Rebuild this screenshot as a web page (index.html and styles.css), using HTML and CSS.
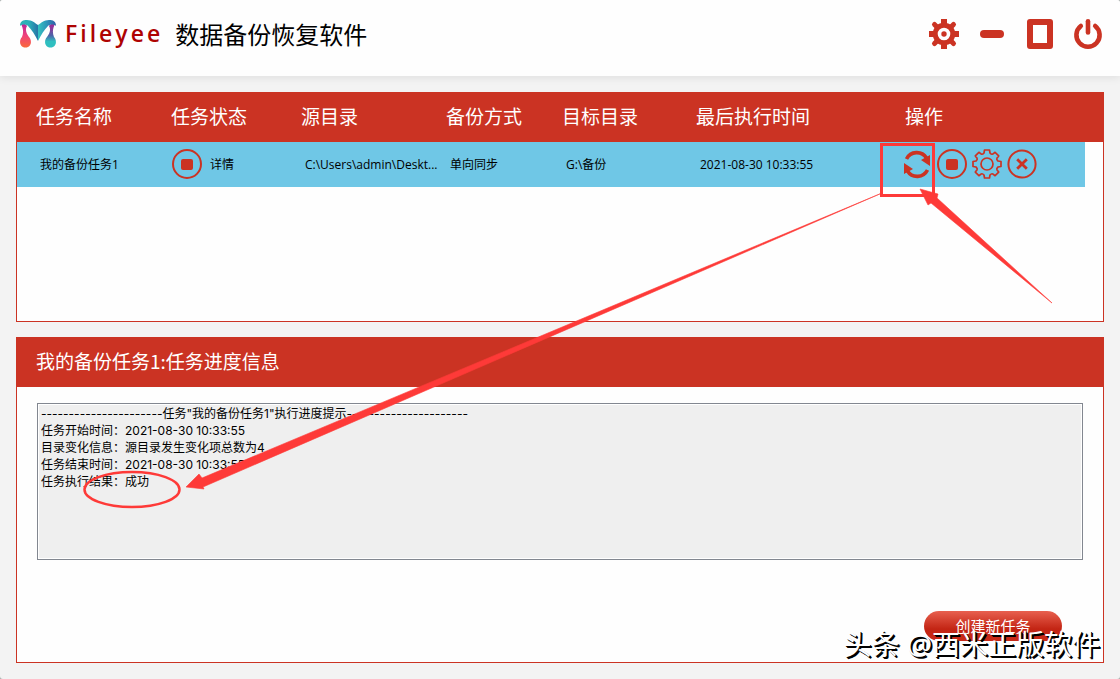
FILE: index.html
```html
<!DOCTYPE html>
<html lang="zh-CN">
<head>
<meta charset="utf-8">
<title>Fileyee 数据备份恢复软件</title>
<link rel="stylesheet" href="styles.css">
</head>
<body>
<div class="window">
  <header class="topbar">
    <svg class="logo" viewBox="0 0 36 28" aria-hidden="true">
      <defs>
        <linearGradient id="legLeft" x1="0" y1="0" x2="0" y2="1">
          <stop offset="0" stop-color="#b5279a"/><stop offset=".5" stop-color="#f0417c"/><stop offset="1" stop-color="#f9693a"/>
        </linearGradient>
        <linearGradient id="legRight" x1="0" y1="0" x2="0" y2="1">
          <stop offset="0" stop-color="#a32a96"/><stop offset=".2" stop-color="#8a3a9c"/><stop offset=".5" stop-color="#4b65a8"/><stop offset=".75" stop-color="#2fbfc0"/>
        </linearGradient>
        <linearGradient id="ribbon" x1="0" y1="0" x2="1" y2="0">
          <stop offset="0" stop-color="#2bb3b8"/><stop offset=".25" stop-color="#2bb0b8"/><stop offset=".49" stop-color="#2875a8"/><stop offset=".5" stop-color="#35c4c0"/><stop offset=".75" stop-color="#2d93b9"/><stop offset="1" stop-color="#315ea6"/>
        </linearGradient>
      </defs>
      <path fill="url(#legLeft)" d="M1 4C3 3 6 4 7 6C5 9 6 13 9 17C12 20 12 27 5.500 27.500C-1 27 -1 20 2 17C4 12 3 8 1 4Z"/>
      <path fill="url(#legRight)" d="M35 4C33 3 30 4 29 6C31 9 30 13 27 17C24 20 24 27 30.500 27.500C37 27 37 20 34 17C32 12 33 8 35 4Z"/>
      <path fill="url(#ribbon)" d="M0 6C0 1 3 0 7 0C12 0 15 3 18 5C21 3 24 0 29 0C33 0 36 1 36 6C34 4 30 4 28 6C24 10 21 15 18 21C15 15 12 10 8 6C6 4 2 4 0 6Z"/>
    </svg>
    <span class="brand">Fileyee</span>
    <h1 class="app-title">数据备份恢复软件</h1>
    <div class="window-actions">
      <button class="icon-button" type="button" aria-label="设置">
        <svg class="icon" viewBox="-15 -15 30 30">
          <g fill="none" stroke="currentColor">
            <circle r="8.800" stroke-width="5"/>
            <path stroke-width="6" d="M0-15V-9M0 15V9M-15 0H-9M15 0H9"/>
            <path stroke-width="5" stroke-linecap="round" d="M-9.500-9.500L-7-7M9.500-9.500L7-7M-9.500 9.500L-7 7M9.500 9.500L7 7"/>
          </g>
          <circle r="2.700" fill="currentColor"/>
        </svg>
      </button>
      <button class="icon-button" type="button" aria-label="最小化">
        <svg class="icon" viewBox="0 0 30 30"><rect x="3" y="11" width="24" height="8" rx="4" fill="currentColor"/></svg>
      </button>
      <button class="icon-button" type="button" aria-label="最大化">
        <svg class="icon" viewBox="0 0 30 30"><path fill="currentColor" fill-rule="evenodd" d="M5 0H25Q28 0 28 3V27Q28 30 25 30H5Q2 30 2 27V3Q2 0 5 0ZM8 6V24H22V6Z"/></svg>
      </button>
      <button class="icon-button" type="button" aria-label="关闭">
        <svg class="icon" viewBox="0 0 30 30"><g fill="none" stroke="currentColor" stroke-width="4.600" stroke-linecap="round"><path d="M7.800 7A11.600 11.600 0 1 0 22.200 7"/><path d="M15 2.300V13.500"/></g></svg>
      </button>
    </div>
  </header>

  <main class="content">
    <section class="panel task-panel">
      <table class="tasks">
        <colgroup>
          <col class="col-name"><col class="col-state"><col class="col-source"><col class="col-mode"><col class="col-target"><col class="col-time"><col><col class="col-scroll">
        </colgroup>
        <thead>
          <tr><th>任务名称</th><th>任务状态</th><th>源目录</th><th>备份方式</th><th>目标目录</th><th>最后执行时间</th><th>操作</th><th></th></tr>
        </thead>
        <tbody>
          <tr>
            <td>我的备份任务1</td>
            <td class="state-cell">
              <div class="state">
                <button class="icon-button" type="button" aria-label="停止">
                  <svg class="icon" viewBox="0 0 30 30"><circle cx="15" cy="15" r="14" fill="none" stroke="currentColor" stroke-width="2"/><rect x="9" y="10" width="12" height="11" rx="2" fill="currentColor"/></svg>
                </button>
                <span>详情</span>
              </div>
            </td>
            <td>C:\Users\admin\Deskt...</td>
            <td>单向同步</td>
            <td>G:\备份</td>
            <td>2021-08-30 10:33:55</td>
            <td class="actions-cell">
              <div class="actions">
                <button class="icon-button" type="button" aria-label="执行">
                  <svg class="icon" viewBox="-15 -15 30 30">
                    <g fill="none" stroke="currentColor" stroke-width="3.600"><path d="M-10.500-5A11.500 11.500 0 0 1 9.500-6"/><path d="M10.500 6A11.500 11.500 0 0 1-9.500 7"/></g>
                    <path fill="currentColor" d="M13-9V2L4-4ZM-13 10V-1L-4 5Z"/>
                  </svg>
                </button>
                <button class="icon-button" type="button" aria-label="停止任务">
                  <svg class="icon" viewBox="0 0 30 30"><circle cx="15" cy="15" r="14" fill="none" stroke="currentColor" stroke-width="2"/><rect x="9" y="10" width="12" height="11" rx="2" fill="currentColor"/></svg>
                </button>
                <button class="icon-button" type="button" aria-label="任务设置">
                  <svg class="icon" viewBox="-15 -15 30 30">
                    <g fill="none" stroke="currentColor" stroke-width="1.700" stroke-linejoin="round">
                      <circle r="6"/>
                      <path d="M-2.500-14H2.500L3-11Q4.500-9.300 5.700-9.900L8.100-11.700L11.700-8.100L9.900-5.700Q9.300-4.500 11-3L14-2.500V2.500L11 3Q9.300 4.500 9.900 5.700L11.700 8.100L8.100 11.700L5.700 9.900Q4.500 9.300 3 11L2.500 14H-2.500L-3 11Q-4.500 9.300-5.700 9.900L-8.100 11.700L-11.700 8.100L-9.900 5.700Q-9.300 4.500-11 3L-14 2.500V-2.500L-11-3Q-9.300-4.500-9.900-5.700L-11.700-8.100L-8.100-11.700L-5.700-9.900Q-4.500-9.300-3-11Z"/>
                    </g>
                  </svg>
                </button>
                <button class="icon-button" type="button" aria-label="删除任务">
                  <svg class="icon" viewBox="-15 -15 30 30"><g fill="none" stroke="currentColor"><circle r="13.600" stroke-width="2"/><path stroke-width="2.800" d="M-4.800-4.800L4.800 4.800M4.800-4.800L-4.800 4.800"/></g></svg>
                </button>
              </div>
            </td>
            <td class="scroll-gap"></td>
          </tr>
        </tbody>
      </table>
    </section>

    <section class="panel">
      <h2 class="panel-title" id="progressTitle">我的备份任务1:任务进度信息</h2>
      <div class="panel-body">
        <textarea class="log" readonly aria-labelledby="progressTitle">----------------------任务"我的备份任务1"执行进度提示----------------------
任务开始时间：2021-08-30 10:33:55
目录变化信息：源目录发生变化项总数为4
任务结束时间：2021-08-30 10:33:55
任务执行结果：成功</textarea>
        <button class="create" type="button">创建新任务</button>
      </div>
    </section>
  </main>

  <svg class="marks" width="1120" height="679" viewBox="0 0 1120 679" aria-hidden="true">
    <rect x="881.500" y="144.500" width="52" height="51" fill="none" stroke="#fe3a38" stroke-width="3"/>
    <ellipse cx="132" cy="489.500" rx="47.500" ry="17.500" fill="none" stroke="#fe3a38" stroke-width="2.500"/>
    <path fill="#fe3a38" stroke="#fe3a38" stroke-width=".6" stroke-linejoin="round" d="M186 487L199 474L202 478L882 193L203 487L204 489Z"/>
    <path fill="#fe3a38" stroke="#fe3a38" stroke-width=".6" stroke-linejoin="round" d="M920 189L938 194L937 198L1052 303L931 203L928 205Z"/>
  </svg>
  <div class="watermark">头条 @西米正版软件</div>
</div>
</body>
</html>
```
FILE: styles.css
```css
* { box-sizing: border-box; }
html { background: #a9b0ae; }
body { margin: 0; font: 12px/17px "Open Sans", "Noto Sans CJK SC", sans-serif; color: #000; }
button { padding: 0; border: 0; background: none; font: inherit; color: inherit; }

.window { position: relative; min-height: 100vh; display: flex; flex-direction: column; background: #f3f3f3; border-radius: 3px; overflow: hidden; }

.topbar { display: flex; align-items: center; height: 76px; padding: 0 17px 8px 20px; background: #fefefe; box-shadow: 0 2px 8px rgba(0, 0, 0, .08); }
.logo { width: 36px; height: 28px; }
.brand { margin-left: 9px; padding-bottom: 2px; font-size: 23px; line-height: 32px; font-weight: 600; letter-spacing: 3px; color: #ae0303; }
.app-title { margin: 0 0 0 12px; font: 400 24px/36px "Noto Sans CJK SC", sans-serif; }
.window-actions { display: flex; gap: 18px; margin-left: auto; color: #cb3323; }
.icon-button { width: 30px; height: 30px; flex: none; }
.icon { display: block; width: 30px; height: 30px; }

.content { flex: 1; display: flex; flex-direction: column; gap: 15px; padding: 16px; }
.panel { background: #fefefe; border: 1px solid #cb3323; }
.task-panel { min-height: 230px; }

.tasks { width: 100%; table-layout: fixed; border-collapse: collapse; }
.col-name { width: 150px; }
.col-state { width: 130px; }
.col-source { width: 145px; }
.col-mode { width: 116px; }
.col-target { width: 134px; }
.col-time { width: 209px; }
.col-scroll { width: 18px; }
.tasks th { height: 49px; padding: 0 0 3px 4px; background: #cb3323; color: #fff; font: 400 19px/28px "Noto Sans CJK SC", sans-serif; text-align: left; white-space: nowrap; }
.tasks th:first-child { padding-left: 19px; }
.tasks td { height: 45px; padding: 0 0 1px 8px; background: #6fc7e6; white-space: nowrap; }
.tasks td:first-child { padding-left: 23px; }
.tasks .state-cell { padding-left: 5px; }
.tasks .actions-cell { padding-left: 1px; }
.tasks .scroll-gap { background: none; }
.state { display: flex; align-items: center; gap: 8px; }
.state .icon, .actions { color: #cb3323; }
.actions { display: flex; gap: 5px; }

.panel-title { margin: 0; padding: 9px 19px 12px; background: #cb3323; color: #fff; font: 400 19px/28px "Noto Sans CJK SC", sans-serif; }
.panel-body { display: flex; flex-direction: column; padding: 16px 20px 21px; }
.log { display: block; width: 100%; height: 157px; margin: 0; padding: 1px 3px; resize: none; border: 1px solid #828790; box-shadow: inset 0 0 0 1px #fff; background: #efefef; color: #000; font: 12px/17px Inter, "Noto Sans CJK SC", sans-serif; outline: 0; }
.create { align-self: flex-end; width: 138px; height: 30px; margin: 51px 21px 0 0; border-radius: 15px; background: linear-gradient(#e8604f, #c32514 60%, #c92a18); color: #fff; font: 15px/30px "Noto Sans CJK SC", sans-serif; }

.marks { position: absolute; top: 0; left: 0; pointer-events: none; }
.watermark { position: absolute; right: 20px; bottom: 15px; font: 28px/40px "Open Sans", "Noto Sans CJK SC", sans-serif; color: #fff; text-shadow: 1px 1px 0 #000, 2px 2px 0 #000; pointer-events: none; }
```
